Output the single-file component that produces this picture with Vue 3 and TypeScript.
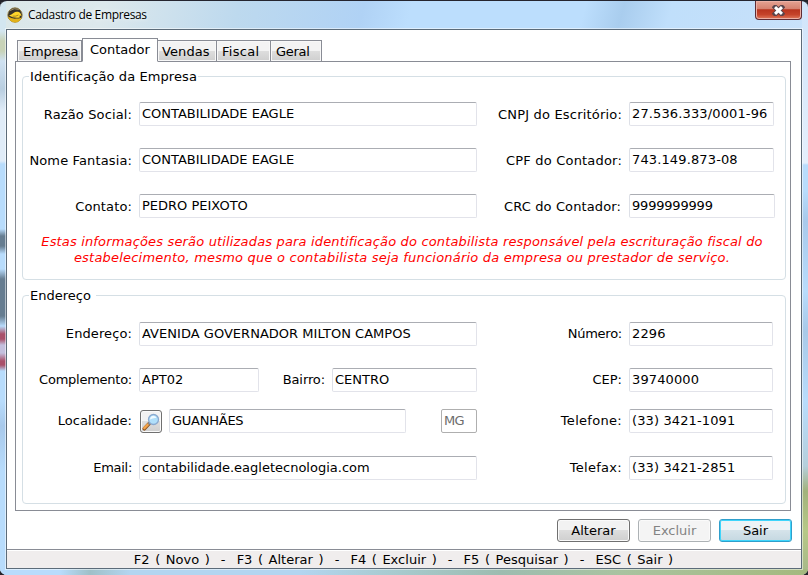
<script setup lang="ts">
import { ref } from 'vue'

interface Field {
  label: string
  value: string
  kind: string
}

const tabs = ['Empresa', 'Contador', 'Vendas', 'Fiscal', 'Geral']
const active = ref('Contador')

const identity = ref<Field[][]>([
  [
    { label: 'Razão Social:', value: 'CONTABILIDADE EAGLE', kind: 'wide' },
    { label: 'CNPJ do Escritório:', value: '27.536.333/0001-96', kind: 'side' },
  ],
  [
    { label: 'Nome Fantasia:', value: 'CONTABILIDADE EAGLE', kind: 'wide' },
    { label: 'CPF do Contador:', value: '743.149.873-08', kind: 'side' },
  ],
  [
    { label: 'Contato:', value: 'PEDRO PEIXOTO', kind: 'wide' },
    { label: 'CRC do Contador:', value: '9999999999', kind: 'side crc' },
  ],
])
</script>

<template>
  <div class="window">
    <header class="titlebar">
      <svg class="logo" viewBox="0 0 16 16">
        <circle cx="8" cy="8" r="7.2" fill="#38332b" stroke="#8a7434" stroke-width=".8" />
        <path d="M.8 9.5Q5 12 9 11.6Q12 11.6 14.8 10.4Q12.5 15.5 8 15.5Q2.5 15 .8 9.5Z" fill="#e2b21a" />
        <path d="M2 8.4Q4.5 8 6.5 6Q8.5 4.2 11 4.8Q14 5.6 14.4 9L12.6 8.4L12.8 10.4Q7 11.6 2 8.4Z" fill="#ffd52c" />
        <path d="M3 3.6Q7 .5 11.8 2.4" fill="none" stroke="#9b8c62" />
        <path d="M5.5 9.2Q9 9.6 11.5 8" fill="none" stroke="#8b6816" stroke-width=".7" />
      </svg>
      <span class="title">Cadastro de Empresas</span>
      <button class="close" aria-label="Fechar">
        <svg viewBox="0 0 12 10">
          <path d="M3 2L9 8M9 2L3 8" stroke="#59444b" stroke-width="4.6" stroke-linecap="square" />
          <path d="M2.8 1.9L9.2 8.1M9.2 1.9L2.8 8.1" stroke="#fff" stroke-width="2.7" />
        </svg>
      </button>
    </header>
    <main class="client">
      <nav class="tabs">
        <button v-for="t in tabs" :key="t" class="tab" :class="[t.toLowerCase(), { active: t === active }]" @click="active = t">{{ t }}</button>
      </nav>
      <section class="panel">
        <fieldset class="group first">
          <legend>Identificação da Empresa</legend>
          <div v-for="(row, i) in identity" :key="i" class="row">
            <template v-for="f in row" :key="f.label">
              <label :class="f.kind">{{ f.label }}</label>
              <input v-model="f.value" :class="f.kind" />
            </template>
          </div>
          <p class="notice"><span class="n1">Estas informações serão utilizadas para identificação do contabilista responsável pela escrituração fiscal do</span><br /><span class="n2">estabelecimento, mesmo que o contabilista seja funcionário da empresa ou prestador de serviço.</span></p>
        </fieldset>
        <fieldset class="group second">
          <legend>Endereço</legend>
          <div class="row">
            <label class="street">Endereço:</label><input class="wide street" value="AVENIDA GOVERNADOR MILTON CAMPOS" />
            <label class="side tight">Número:</label><input class="num" value="2296" />
          </div>
          <div class="row">
            <label class="tight">Complemento:</label><input class="compl" value="APT02" />
            <label class="bairro">Bairro:</label><input class="side plain" value="CENTRO" />
            <label class="side">CEP:</label><input class="num" value="39740000" />
          </div>
          <div class="row city">
            <label>Localidade:</label>
            <button class="search" aria-label="Pesquisar">
              <svg viewBox="0 0 18 18">
                <path d="M2.3 15.8L7 10.8" stroke="#8d5524" stroke-width="3.6" stroke-linecap="round" />
                <path d="M2.3 15.2L6 11.4" stroke="#f3a34a" stroke-width="2.4" stroke-linecap="round" />
                <path d="M6.4 11.4L8 9.8" stroke="#7c8791" stroke-width="2" />
                <circle cx="11.5" cy="6.5" r="5" fill="#b0dffa" stroke="#8aa9cf" stroke-width="1.3" />
                <path d="M8 6.5Q8.3 3 11.5 2.8Q14 3 14.3 5Q11 4.5 8 6.5Z" fill="#effaff" />
              </svg>
            </button>
            <input class="town" value="GUANHÃES" />
            <input class="uf" value="MG" disabled />
            <label class="side loose">Telefone:</label><input class="num" value="(33) 3421-1091" />
          </div>
          <div class="row">
            <label class="email">Email:</label><input class="wide" value="contabilidade.eagletecnologia.com" />
            <label class="side loose">Telefax:</label><input class="num" value="(33) 3421-2851" />
          </div>
        </fieldset>
      </section>
      <div class="actions">
        <button class="btn">Alterar</button>
        <button class="btn" disabled>Excluir</button>
        <button class="btn default">Sair</button>
      </div>
      <footer class="status">F2 ( Novo )&nbsp; -&nbsp; F3 ( Alterar )&nbsp; -&nbsp; F4 ( Excluir )&nbsp; -&nbsp; F5 ( Pesquisar )&nbsp; -&nbsp; ESC ( Sair )</footer>
    </main>
  </div>
</template>

<style>
body { margin: 0; background: #24242b; overflow: hidden; }
</style>

<style scoped>
* { box-sizing: border-box; }
.window {
  width: 808px; height: 575px; padding: 0 6px 6px; border-top: 1px solid #25252f; border-radius: 7px;
  font: 13px/16px "DejaVu Sans", Verdana, sans-serif; color: #000;
  background:
    linear-gradient(90deg, #b8dcfc 0 60px, #9fc0c8 90px, #b3d5f0 130px 300px, #a8cbd0 390px, #9dbcb0 500px, #a9c3a0 620px, #a4b97e 808px) 0 100% / 808px 6px no-repeat,
    linear-gradient(180deg, #d0e4fa 0, #e4effc 162px, #b8dcfc 164px 190px, #a8c9eb 220px, #b8dcfc 290px, #a8c9e8 330px, #b8dcfc 400px, #b5cfdc 465px, #a2b27c 490px, #b6c887 530px, #a6b789 575px) 100% 0 / 6px 574px no-repeat,
    linear-gradient(180deg, #d3e6f0 0 30px, #c8d3b8 40px 50px, #d0e2f2 60px, #b9cee0 88px, #e0ecf8 110px 160px, #b8dcfc 163px 228px, #667d91 235px 245px, #b8dcfc 253px 268px, #667d91 278px 315px, #b8dcfc 325px, #a9506a 333px 338px, #c4c0de 344px 352px, #a9506a 360px 364px, #b8dcfc 370px 400px, #a8c9eb 425px, #b8dcfc 470px 575px) 0 0 / 6px 574px no-repeat,
    linear-gradient(105deg, #dbe7e8 0, #dce8ec 11%, #bdd9ee 25%, #b0d2f5 38%, #bcdefd 43%, #bcdefd 61%, #a9cdee 65%, #c0dffb 70%, #c5e0fa 80%, #d6e7fd 100%);
}
.titlebar { height: 28px; display: flex; align-items: flex-start; }
.logo { width: 16px; height: 16px; margin: 6px 0 0 1px; }
.title { margin: 6px 0 0 5px; font: 12px/16px "Open Sans", sans-serif; letter-spacing: -0.34px; text-shadow: 0 0 5px #fff; }
.close {
  margin-left: auto; width: 47px; height: 19px; padding: 0; border: 1px solid #5e2c34; border-top: 0;
  border-radius: 0 0 4px 4px; box-shadow: inset 0 0 0 1px #ecb0a5; display: flex; align-items: center; justify-content: center;
  background: linear-gradient(#e5a393 0, #d5806f 45%, #b8341e 48%, #c5432a 75%, #df795c 100%);
}
.close svg { width: 13px; height: 11px; }
.client { width: 796px; height: 540px; border: 1px solid #5c6b79; background: #fff; display: flex; flex-direction: column; box-shadow: 0 0 0 1px rgba(255, 255, 255, 0.5); }
.tabs { display: flex; align-items: flex-end; flex: none; height: 32px; padding: 8px 0 0 10px; z-index: 1; }
.tab {
  height: 22px; padding: 1px 0 0 5px; border: 1px solid #898c95; border-left: 0; text-align: left; font: inherit; white-space: nowrap;
  background: linear-gradient(#f3f3f3 0 48%, #dedede 50%, #cfcfcf 100%); box-shadow: inset 0 0 0 1px #f8f8f8;
}
.tab.active { height: 24px; background: #fff; border-bottom-color: #fff; box-shadow: none; padding: 0 0 1px 7px; }
.tab.empresa { width: 65px; border-left: 1px solid #898c95; letter-spacing: -0.25px; }
.tab.contador { width: 76px; border-left: 1px solid #898c95; }
.tab.vendas { width: 59px; padding-left: 4px; letter-spacing: 0.1px; }
.tab.fiscal { width: 54px; letter-spacing: 0.3px; }
.tab.geral { width: 51px; letter-spacing: -0.3px; }
.panel { flex: none; width: 776px; height: 450px; margin: -1px 0 0 8px; border: 1px solid #898c95; padding: 6px 0 0 6px; }
.group { margin: 0; padding: 0; width: 764px; border: 1px solid #d5dfe5; border-radius: 4px; min-width: 0; }
legend { margin-left: 6px; padding: 0 1px; height: 16px; line-height: 18px; letter-spacing: 0.09px; }
.first { height: 212px; }
.second { height: 217px; margin-top: 7px; }
.second legend { padding-right: 5px; letter-spacing: 0; }
.row { display: flex; align-items: center; height: 24px; margin-bottom: 22px; }
.first legend + .row { margin-top: 18px; }
.second legend + .row { margin-top: 19px; }
label { width: 109px; margin-right: 7px; text-align: right; white-space: nowrap; flex: none; }
.first label { padding-top: 1px; letter-spacing: 0.13px; }
.first label.side { letter-spacing: 0.19px; }
label.side { width: 145px; }
.first label.side.crc { margin-right: 8px; width: 144px; letter-spacing: 0.12px; }
label.bairro { width: 66px; letter-spacing: -0.1px; }
label.tight { letter-spacing: -0.25px; }
label.loose { letter-spacing: 0.3px; }
label.street { letter-spacing: 0.1px; }
label.email { letter-spacing: -0.3px; }
input {
  height: 24px; padding: 0 0 1px 2px; margin: 0; font: inherit; color: #000; background: #fff; outline: 0; flex: none;
  border: 1px solid #e2e3ea; border-top-color: #abadb3; border-left-color: #dde0e7; border-radius: 2px;
}
input.wide { width: 338px; }
input.street { letter-spacing: 0.03px; }
input.side { width: 145px; letter-spacing: 0.13px; }
input.plain { letter-spacing: 0; }
input.crc { width: 146px; letter-spacing: -0.2px; }
input.num { width: 144px; letter-spacing: 0.12px; }
input.compl { width: 120px; }
input.town { width: 237px; margin: 0 35px 0 7px; letter-spacing: -0.25px; }
input.uf { width: 36px; border-color: #afafaf; color: #6d6d6d; letter-spacing: -0.6px; }
.search {
  width: 22px; height: 23px; margin: 1px 0 0 1px; padding: 1px; border: 1px solid #707070; border-radius: 3px; flex: none;
  background: linear-gradient(#f2f2f2 0 48%, #dddddd 50%, #cfcfcf); box-shadow: inset 0 0 0 1px #fafafa;
}
.search svg { width: 18px; height: 18px; display: block; }
.row.city { margin: -5px 0 23px; }
.notice { margin: -6px 0 0; padding-right: 4px; text-align: center; color: #f00; font-style: italic; white-space: nowrap; }
.n1 { letter-spacing: 0.162px; }
.n2 { letter-spacing: 0.21px; }
.actions { display: flex; flex: none; justify-content: flex-end; gap: 8px; padding: 8px 9px 0 0; height: 38px; }
.btn {
  width: 73px; height: 23px; padding: 0; border: 1px solid #707070; border-radius: 3px; font: inherit; color: #000;
  background: linear-gradient(#f2f2f2 0 48%, #dddddd 50%, #cfcfcf); box-shadow: inset 0 0 0 1px #fafafa;
}
.btn:disabled { color: #838383; border-color: #adb2b5; background: #f4f4f4; }
.btn.default { border-color: #2f9fcc; box-shadow: inset 0 0 0 1px #3fd5fb; background: linear-gradient(#edf3f6 0 48%, #d5e3ea 50%, #c5d8e1); }
.status {
  flex: none; height: 19px; border-top: 1px solid #898c95; background: #f0eded; box-shadow: inset 0 1px #fff; padding: 1px 1px 0 0;
  text-align: center; line-height: 18px; white-space: nowrap; word-spacing: 1.38px; letter-spacing: 0.02px;
}
</style>
